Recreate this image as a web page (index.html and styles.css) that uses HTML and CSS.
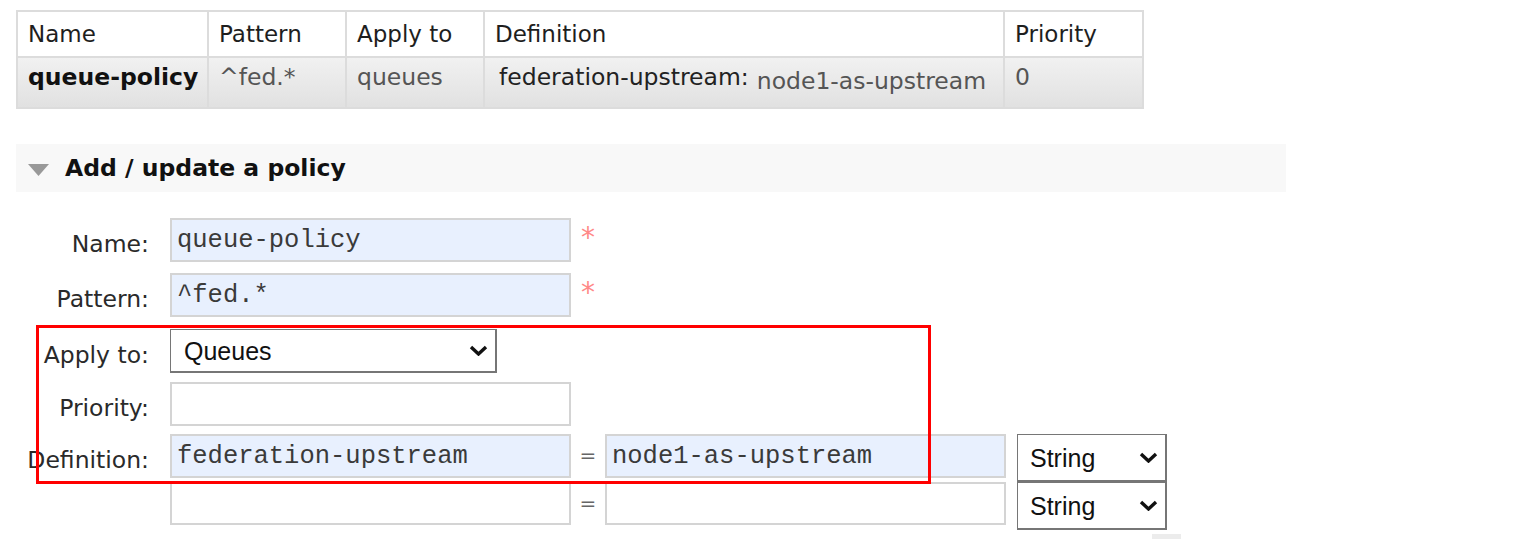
FILE: index.html
```html
<!DOCTYPE html>
<html>
<head>
<meta charset="utf-8">
<title>Policies</title>
<link rel="stylesheet" href="styles.css">
</head>
<body>
<div class="page">
  <table class="list">
    <colgroup>
      <col class="c-name"><col class="c-pattern"><col class="c-apply"><col class="c-def"><col class="c-prio">
    </colgroup>
    <thead>
      <tr><th>Name</th><th>Pattern</th><th>Apply to</th><th>Definition</th><th>Priority</th></tr>
    </thead>
    <tbody>
      <tr>
        <td class="strong">queue-policy</td>
        <td>^fed.*</td>
        <td>queues</td>
        <td><span class="mini"><span class="mini-key">federation-upstream:</span><span class="mini-val">node1-as-upstream</span></span></td>
        <td>0</td>
      </tr>
    </tbody>
  </table>

  <div class="section">
    <div class="section-head">
      <svg class="tri" width="21" height="12" viewBox="0 0 21 12"><polygon points="0,0 21,0 10.5,12" fill="#999"/></svg>
      <h2>Add / update a policy</h2>
    </div>

    <form class="form">
      <div class="row gap11">
        <label class="lbl">Name:</label>
        <input class="field filled" type="text" value="queue-policy">
        <span class="req">*</span>
      </div>
      <div class="row gap12">
        <label class="lbl">Pattern:</label>
        <input class="field filled" type="text" value="^fed.*">
        <span class="req">*</span>
      </div>
      <div class="row gap9">
        <label class="lbl">Apply to:</label>
        <span class="sel sel-apply">
          <select><option>Queues</option></select>
          <svg class="chev" width="19" height="11" viewBox="0 0 19 11"><path d="M2 2 L9.5 9 L17 2" fill="none" stroke="#111" stroke-width="3.4"/></svg>
        </span>
      </div>
      <div class="row gap8">
        <label class="lbl">Priority:</label>
        <input class="field" type="text" value="">
      </div>
      <div class="row">
        <label class="lbl">Definition:</label>
        <input class="field filled" type="text" value="federation-upstream">
        <span class="eq">=</span>
        <input class="field filled" type="text" value="node1-as-upstream">
        <span class="sel sel-type">
          <select><option>String</option></select>
          <svg class="chev" width="19" height="11" viewBox="0 0 19 11"><path d="M2 2 L9.5 9 L17 2" fill="none" stroke="#111" stroke-width="3.4"/></svg>
        </span>
      </div>
      <div class="row">
        <span class="lbl"></span>
        <input class="field short" type="text" value="">
        <span class="eq">=</span>
        <input class="field short" type="text" value="">
        <span class="sel sel-type">
          <select><option>String</option></select>
          <svg class="chev" width="19" height="11" viewBox="0 0 19 11"><path d="M2 2 L9.5 9 L17 2" fill="none" stroke="#111" stroke-width="3.4"/></svg>
        </span>
      </div>
      <div class="tail"><span class="tail-btn"></span></div>
      <div class="highlight"></div>
    </form>
  </div>
</div>
</body>
</html>
```

FILE: styles.css
```css
* { box-sizing: border-box; }

html, body {
  margin: 0;
  padding: 0;
  background: #fff;
  overflow: hidden;
}

body {
  font-family: "DejaVu Sans", Verdana, sans-serif;
  font-size: 23.5px;
  color: #222;
}

.page {
  padding: 10px 0 0 16px;
}

/* ---------- list table ---------- */
.list {
  border-collapse: collapse;
  table-layout: fixed;
  width: 1126px;
}
.c-name { width: 191px; }
.c-pattern { width: 138px; }
.c-apply { width: 138px; }
.c-def { width: 520px; }
.c-prio { width: 139px; }

.list th,
.list td {
  border: 2px solid #dcdcdc;
  text-align: left;
  font-weight: normal;
  padding: 0 10px;
  line-height: 27px;
  white-space: nowrap;
}
.list th {
  height: 46px;
  font-size: 23px;
  color: #1e1e1e;
  background: #fff;
}
.list tbody td {
  height: 51px;
  vertical-align: top;
  padding-top: 6px;
  color: #555;
  background: linear-gradient(#f1f1f1, #e1e1e1);
}
.list tbody td.strong {
  font-weight: bold;
  color: #111;
}
.mini {
  display: inline-flex;
  align-items: flex-start;
  padding-left: 4px;
}
.mini-key {
  color: #222;
  margin-top: -4px;
}
.mini-val {
  margin-left: 8px;
  margin-top: 0;
}

/* ---------- section ---------- */
.section {
  margin-top: 35px;
}
.section-head {
  width: 1270px;
  height: 48px;
  background: #f8f8f8;
  display: flex;
  align-items: center;
  padding-left: 12px;
}
.tri {
  display: block;
  margin-top: 3px;
}
.section-head h2 {
  margin: 0 0 0 16px;
  font-size: 23.5px;
  font-weight: bold;
  color: #111;
}

/* ---------- form ---------- */
.form {
  position: relative;
  padding-top: 26px;
}
.row {
  display: flex;
  align-items: flex-start;
}
.gap11 { margin-bottom: 11px; }
.gap12 { margin-bottom: 12px; }
.gap9 { margin-bottom: 9px; }
.gap8 { margin-bottom: 8px; }

.lbl {
  display: block;
  width: 133px;
  margin-right: 21px;
  text-align: right;
  line-height: 27px;
  padding-top: 13px;
  color: #2a2a2a;
  white-space: nowrap;
}

.field {
  width: 401px;
  height: 44px;
  border: 2px solid #d4d4d4;
  background: #fff;
  font-family: "Liberation Mono", "Courier New", monospace;
  font-size: 25.5px;
  color: #3a3a3a;
  padding: 0 5px;
  margin: 0;
  outline: none;
}
.field.filled {
  background: #e8f0fe;
}
.field.short {
  height: 43px;
}

.req {
  margin-left: 10px;
  color: #f88;
  font-size: 28px;
  line-height: 28px;
  padding-top: 6px;
}

.eq {
  width: 34px;
  text-align: center;
  color: #666;
  line-height: 27px;
  padding-top: 8px;
  font-size: 20px;
}

.sel {
  position: relative;
  display: block;
}
.sel select {
  -webkit-appearance: none;
  appearance: none;
  display: block;
  margin: 0;
  background: #fff;
  border: 1px solid #767676;
  border-right-width: 2px;
  border-bottom-width: 2px;
  border-radius: 0;
  font-family: "Liberation Sans", Arial, sans-serif;
  font-size: 25px;
  color: #111;
  padding: 0 0 0 13px;
  outline: none;
}
.sel-apply select {
  width: 327px;
  height: 44px;
}
.sel-type {
  margin-left: 11px;
}
.sel-type select {
  width: 150px;
  height: 48px;
  padding-left: 12px;
}
.chev {
  position: absolute;
  right: 9px;
  top: 50%;
  margin-top: -6px;
}

.tail {
  height: 8px;
  margin-top: 4px;
  padding-left: 1136px;
}
.tail-btn {
  display: block;
  width: 29px;
  height: 8px;
  background: #ececec;
}

.highlight {
  position: absolute;
  left: 20px;
  top: 133px;
  width: 895px;
  height: 159px;
  border: 3px solid #f00;
  pointer-events: none;
}
```
